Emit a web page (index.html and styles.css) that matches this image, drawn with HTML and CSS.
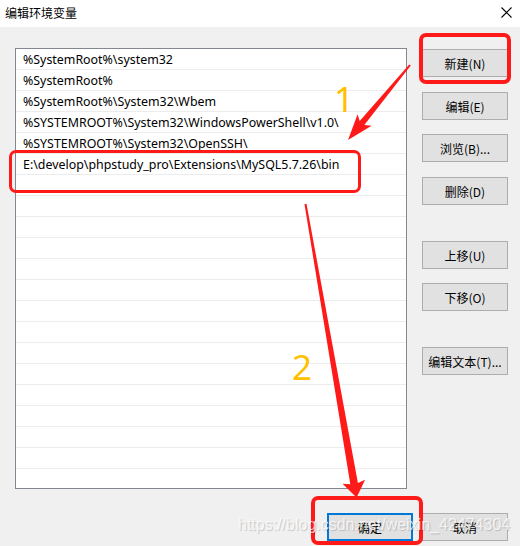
FILE: index.html
```html
<!DOCTYPE html>
<html lang="zh-CN">
<head>
<meta charset="utf-8">
<title>编辑环境变量</title>
<link rel="stylesheet" href="styles.css">
</head>
<body>
<div class="window">
  <div class="titlebar">
    <span class="title">编辑环境变量</span>
    <svg class="close" width="11" height="11" viewBox="0 0 11 11"><path d="M0.5 0.5 L10.5 10.5 M10.5 0.5 L0.5 10.5" stroke="#000" stroke-width="1.1" fill="none"/></svg>
  </div>
  <div class="main">
    <div class="list">
      <div class="row">%SystemRoot%\system32</div>
      <div class="row">%SystemRoot%</div>
      <div class="row">%SystemRoot%\System32\Wbem</div>
      <div class="row">%SYSTEMROOT%\System32\WindowsPowerShell\v1.0\</div>
      <div class="row">%SYSTEMROOT%\System32\OpenSSH\</div>
      <div class="row">E:\develop\phpstudy_pro\Extensions\MySQL5.7.26\bin</div>
      <div class="row"></div><div class="row"></div><div class="row"></div><div class="row"></div>
      <div class="row"></div><div class="row"></div><div class="row"></div><div class="row"></div>
      <div class="row"></div><div class="row"></div><div class="row"></div><div class="row"></div>
      <div class="row"></div><div class="row"></div><div class="row"></div><div class="row"></div>
    </div>
    <div class="side">
      <button class="btn s1">新建(N)</button>
      <button class="btn s15">编辑(E)</button>
      <button class="btn s14">浏览(B)...</button>
      <button class="btn s15">删除(D)</button>
      <button class="btn s36">上移(U)</button>
      <button class="btn s14">下移(O)</button>
      <button class="btn s36">编辑文本(T)...</button>
    </div>
  </div>
  <div class="footer">
    <button class="btn primary">确定</button>
    <button class="btn">取消</button>
  </div>

  <div class="mark box-new"></div>
  <div class="mark box-row"></div>
  <div class="mark box-ok"></div>
  <div class="num num1">1</div>
  <div class="num num2">2</div>
  <svg class="arrows" width="520" height="546" viewBox="0 0 520 546">
    <polygon fill="#ff1a1a" points="410.8,65.6 364.3,124.9 371.6,125.7 348,140 357.6,114.2 359.7,121.1 409.2,64.4"/>
    <polygon fill="#ff1a1a" points="306.5,203.8 357.9,483.1 365.1,479.7 356.6,497.6 342.5,483.7 350.3,484.3 304.5,204.2"/>
  </svg>
  <div class="watermark">https://blog.csdn.net/weixin_42474304</div>
</div>
</body>
</html>
```
FILE: styles.css
```css
html, body {
  margin: 0;
  padding: 0;
}
body {
  width: 520px;
  height: 546px;
  overflow: hidden;
  background: #f0f0f0;
}
.window {
  position: relative;
  width: 520px;
  height: 546px;
  background: #f0f0f0;
  font-family: "Noto Sans", "Noto Sans CJK SC", sans-serif;
  font-size: 12px;
  color: #000;
}
.titlebar {
  height: 27px;
  background: #fff;
  display: flex;
  align-items: center;
  justify-content: space-between;
  padding: 0 8px 0 5px;
}
.title {
  font-family: "Noto Sans CJK SC", sans-serif;
  font-size: 12px;
  margin-top: -2px;
}
.close {
  margin-top: -3px;
}
.main {
  display: flex;
  padding: 21px 0 0 15px;
}
.list {
  box-sizing: border-box;
  width: 392px;
  height: 441px;
  border: 1px solid #828790;
  background: #fff;
  overflow: hidden;
}
.row {
  height: 20px;
  line-height: 21px;
  border-bottom: 1px solid #ececec;
  padding-left: 7px;
  font-family: "Noto Sans", sans-serif;
  font-size: 12.4px;
  white-space: nowrap;
}
.side {
  display: flex;
  flex-direction: column;
  margin-left: 15px;
  width: 86px;
}
.btn {
  box-sizing: border-box;
  width: 86px;
  height: 28px;
  padding: 0;
  background: #e1e1e1;
  border: 1px solid #adadad;
  font-family: "Noto Sans CJK SC", sans-serif;
  font-size: 12px;
  color: #000;
}
.s1 { margin-top: 1px; }
.s14 { margin-top: 14px; }
.s15 { margin-top: 15px; }
.s36 { margin-top: 36px; }
.footer {
  display: flex;
  justify-content: flex-end;
  gap: 9px;
  padding: 24px 12px 0 0;
}
.primary {
  border: 2px solid #0078d7;
}
.mark {
  position: absolute;
  box-sizing: border-box;
  border: 4px solid #ff1a1a;
  border-radius: 7px;
}
.box-new { left: 419px; top: 33px; width: 92px; height: 51px; }
.box-row { left: 9px; top: 150px; width: 352px; height: 43px; border-width: 3px; }
.box-ok { left: 311px; top: 496px; width: 112px; height: 49px; }
.num {
  position: absolute;
  font-family: "Noto Sans", sans-serif;
  font-weight: 400;
  font-size: 35px;
  line-height: 35px;
  color: #ffc000;
}
.num1 { left: 334px; top: 81px; }
.num2 { left: 292px; top: 349px; }
.arrows {
  position: absolute;
  left: 0;
  top: 0;
}
.watermark {
  position: absolute;
  left: 238px;
  top: 516px;
  font-family: "Liberation Sans", sans-serif;
  font-size: 16px;
  color: rgba(255, 255, 255, 0.75);
  text-shadow: 1px 1px 1px rgba(0, 0, 0, 0.18);
  white-space: nowrap;
}
```
